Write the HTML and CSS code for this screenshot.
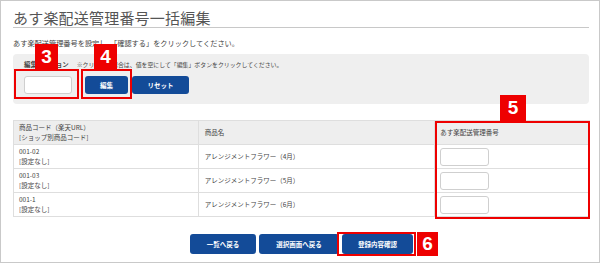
FILE: index.html
```html
<!DOCTYPE html>
<html lang="ja">
<head>
<meta charset="utf-8">
<link rel="stylesheet" href="styles.css">
</head>
<body>
<div class="frame">
  <h1 class="title">あす楽配送管理番号一括編集</h1>
  <p class="desc">あす楽配送管理番号を設定し、「確認する」をクリックしてください。</p>
  <div class="options">
    <div class="opt-head"><span class="opt-label">編集オプション</span><span class="opt-note">※クリアする場合は、値を空にして「編集」ボタンをクリックしてください。</span></div>
    <div class="opt-row">
      <input class="field" type="text">
      <button class="btn btn-edit">編集</button>
      <button class="btn btn-reset">リセット</button>
    </div>
  </div>
  <table class="items">
    <colgroup><col class="c1"><col class="c2"><col class="c3"></colgroup>
    <thead>
      <tr><th>商品コード（楽天URL）<br>[ショップ別商品コード]</th><th>商品名</th><th>あす楽配送管理番号</th></tr>
    </thead>
    <tbody>
      <tr><td>001-02<br>[設定なし]</td><td>アレンジメントフラワー（4月）</td><td><input class="field cell-field" type="text"></td></tr>
      <tr><td>001-03<br>[設定なし]</td><td>アレンジメントフラワー（5月）</td><td><input class="field cell-field" type="text"></td></tr>
      <tr><td>001-1<br>[設定なし]</td><td>アレンジメントフラワー（6月）</td><td><input class="field cell-field" type="text"></td></tr>
    </tbody>
  </table>
  <div class="actions">
    <button class="btn btn-a">一覧へ戻る</button>
    <button class="btn btn-b">選択画面へ戻る</button>
    <button class="btn btn-c">登録内容確認</button>
  </div>

  <div class="mark box3"></div><div class="tag tag3">3</div>
  <div class="mark box4"></div><div class="tag tag4">4</div>
  <div class="mark box5"></div><div class="tag tag5">5</div>
  <div class="mark box6"></div><div class="tag tag6">6</div>
</div>
</body>
</html>
```
FILE: styles.css
```css
html, body {
  margin: 0;
  padding: 0;
  background: #fff;
}
body {
  font-family: "Noto Sans CJK JP", "Noto Sans", sans-serif;
  color: #444;
}
.frame {
  position: relative;
  width: 600px;
  height: 263px;
  box-sizing: border-box;
  border: 1px solid #c9c9c9;
  padding: 0 10px 0 12px;
}
.title {
  margin: 0;
  padding-top: 8px;
  font-size: 15px;
  line-height: 18px;
  font-weight: 400;
  color: #555;
  border-bottom: 1px solid #c8c8c8;
  letter-spacing: 0.2px;
}
.desc {
  margin: 10px 0 0;
  font-size: 7.2px;
  line-height: 10px;
  color: #444;
}
.options {
  margin-top: 6px;
  height: 50px;
  box-sizing: border-box;
  background: #efefef;
  border-radius: 4px;
  padding: 7px 0 0 11px;
}
.opt-head {
  display: flex;
  align-items: center;
  height: 8px;
  line-height: 8px;
}
.opt-label {
  font-size: 6.4px;
  font-weight: 700;
  color: #444;
}
.opt-note {
  margin-left: 8px;
  font-size: 5.9px;
  color: #444;
}
.opt-row {
  display: flex;
  align-items: center;
  margin-top: 7px;
  height: 18px;
}
.field {
  box-sizing: border-box;
  width: 48px;
  height: 18px;
  margin: 0;
  padding: 0;
  border: 1px solid #cfcfcf;
  border-radius: 3px;
  background: #fff;
}
.btn {
  box-sizing: border-box;
  height: 18px;
  margin: 0;
  padding: 0;
  border: none;
  border-radius: 3px;
  background: #134b98;
  color: #fff;
  font-family: "Noto Sans CJK JP", "Noto Sans", sans-serif;
  font-size: 6.5px;
  font-weight: 700;
}
.btn-edit { width: 43px; margin-left: 13px; }
.btn-reset { width: 57px; margin-left: 4px; }

.items {
  margin-top: 16px;
  width: 577px;
  border-collapse: collapse;
  font-size: 6.5px;
  line-height: 9.5px;
  color: #444;
}
.c1 { width: 185px; }
.c2 { width: 237px; }
.c3 { width: 155px; }
.items th, .items td {
  height: 24px;
  box-sizing: border-box;
  padding: 0 0 0 5px;
  border: 1px solid #dedede;
  text-align: left;
  vertical-align: middle;
}
.items th {
  background: #eeeeee;
  font-weight: 400;
}
.items td:nth-child(2), .items th:nth-child(2) { padding-left: 6px; }
.cell-field {
  display: block;
  width: 49px;
  height: 18px;
}
.actions {
  display: flex;
  justify-content: center;
  gap: 3px;
  margin-top: 17px;
  padding-left: 1px;
}
.actions .btn { height: 20px; }
.btn-a { width: 66px; }
.btn-b { width: 80px; }
.btn-c { width: 71px; }

.mark {
  position: absolute;
  box-sizing: border-box;
  border: 2px solid #ee0000;
}
.tag {
  position: absolute;
  background: #ee0000;
  color: #fff;
  font-family: "Liberation Sans", Arial, sans-serif;
  font-weight: 700;
  font-size: 19px;
  display: flex;
  align-items: center;
  justify-content: center;
}
.box3 { left: 13px; top: 68px; width: 65px; height: 30px; }
.tag3 { left: 34px; top: 43px; width: 23px; height: 25px; }
.box4 { left: 80px; top: 68px; width: 51px; height: 30px; }
.tag4 { left: 93px; top: 43px; width: 23px; height: 25px; }
.box5 { left: 434px; top: 120px; width: 155px; height: 98px; }
.tag5 { left: 499px; top: 94px; width: 26px; height: 26px; }
.box6 { left: 336px; top: 231px; width: 79px; height: 24px; }
.tag6 { left: 416px; top: 231px; width: 21px; height: 24px; }
```
